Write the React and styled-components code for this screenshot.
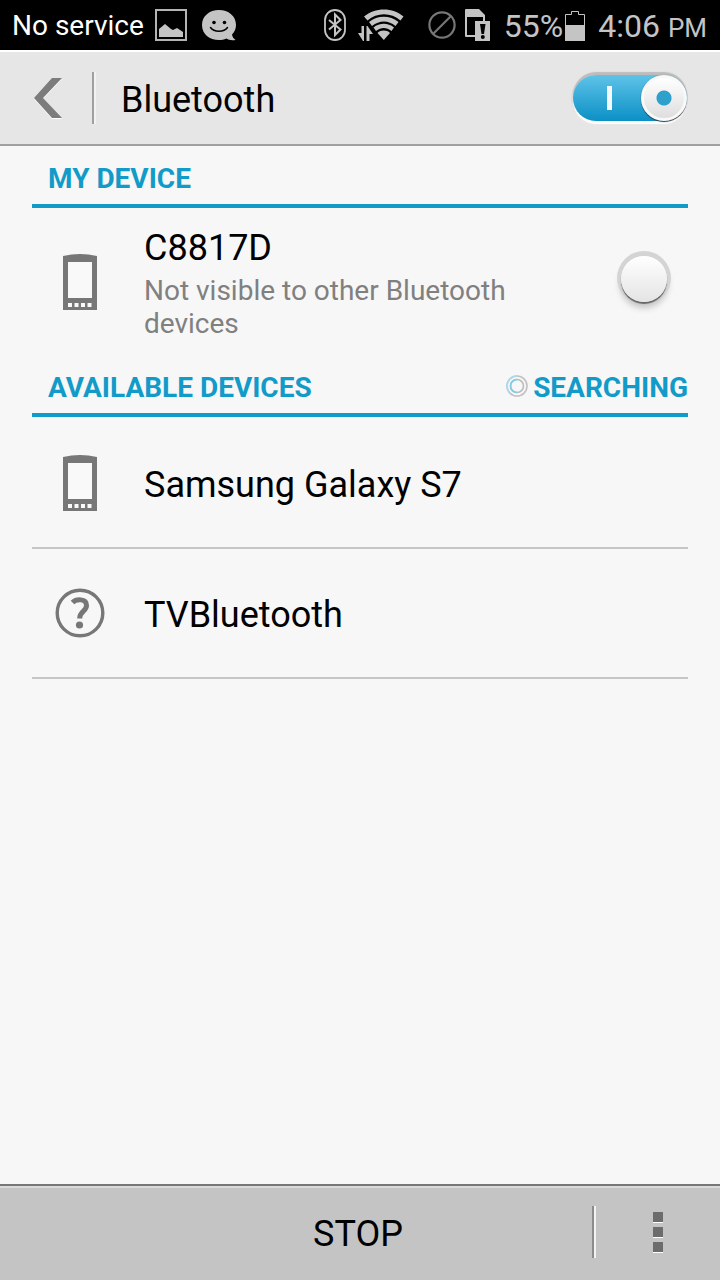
import React, { useState } from 'react';
import styled, { createGlobalStyle } from 'styled-components';

const GlobalStyle = createGlobalStyle`
	*, *::before, *::after {
		box-sizing: border-box;
	}
	body {
		margin: 0;
		background: #f7f7f7;
		color: #000;
		font-family: Roboto, "Liberation Sans", sans-serif;
	}
	button {
		border: 0;
		padding: 0;
		background: none;
		color: inherit;
		font-family: inherit;
		cursor: pointer;
	}
`

const Page = styled.div`
	display: flex;
	flex-direction: column;
	min-height: 100vh;
`

const StatusBar = styled.div`
	display: flex;
	align-items: center;
	justify-content: space-between;
	height: 50px;
	padding: 0 13px 0 12px;
	background: #000;
	color: #c4c4c4;
	font-size: 32px;
	& svg {
		display: block;
		flex: none;
	}
`

const StatusGroup = styled.div`
	display: flex;
	align-items: center;
	gap: ${ ({ $gap }) => $gap };
`

const Carrier = styled.span`
	color: #fff;
	font-size: 28px;
	margin-right: -4px;
`

const Battery = styled.span`
	display: flex;
	align-items: center;
	gap: 2px;
	padding-left: 4px;
	line-height: 48px;
	padding-top: 1px;
`

const Clock = styled.time`
	padding: 1px 0 0 4px;
	& small {
		font-size: 26px;
	}
`

const Header = styled.header`
	display: flex;
	align-items: center;
	height: 96px;
	padding-right: 33px;
	background: #e6e6e6;
	border-top: 2px solid #fff;
	border-bottom: 2px solid #a0a0a0;
`

const BackButton = styled.button`
	display: flex;
	align-items: center;
	justify-content: center;
	width: 92px;
	height: 52px;
	padding-left: 4px;
`

const Divider = styled.span`
	width: 4px;
	height: 52px;
	border-left: 2px solid ${ ({ $dark }) => $dark ? '#8c8c8c' : '#a0a0a0' };
	border-right: 2px solid #f2f2f2;
`

const Title = styled.h1`
	flex-grow: 1;
	margin: 0;
	padding: 4px 0 0 25px;
	font-size: 36px;
	font-weight: 400;
`

const Switch = styled.input`
	appearance: none;
	display: flex;
	align-items: center;
	justify-content: flex-end;
	width: 114px;
	height: 46px;
	margin: 0;
	border-radius: 23px;
	background: ${ ({ checked }) => checked ? 'linear-gradient(#5fc3e8, #0b90c6)' : '#bbb' };
	box-shadow: 0 -3px 1px #bcbcbc, 0 3px 1px #fff, -2px 0 1px #dcdcdc;
	&::before {
		content: '';
		width: 5px;
		height: 24px;
		margin-right: 29px;
		background: #f4fafc;
	}
	&::after {
		content: '';
		width: 46px;
		height: 46px;
		border: 3px solid #f9f9f9;
		border-radius: 50%;
		background: radial-gradient(circle, #2da0cc 7px, transparent 8px), linear-gradient(#fff, #dedede);
		box-shadow: 0 1px 1px #333, 0 0 1px #777;
	}
`

const Main = styled.main`
	flex-grow: 1;
	padding: 0 32px;
`

const SectionTitle = styled.h2`
	display: flex;
	align-items: center;
	justify-content: space-between;
	height: 62px;
	margin: 0;
	padding: 7px 0 0 16px;
	border-bottom: 4px solid #129bc8;
	color: #129bc8;
	font-size: 28px;
	font-weight: 700;
	line-height: 33px;
`

const Searching = styled.span`
	display: flex;
	align-items: center;
	gap: 5px;
	& svg {
		margin-bottom: 4px;
	}
`

const MyDevice = styled.label`
	display: flex;
	align-items: center;
	min-height: 147px;
	padding-right: 21px;
`

const IconCell = styled.span`
	display: flex;
	align-items: center;
	justify-content: center;
	flex: none;
	width: 96px;
	margin-right: 16px;
`

const DeviceText = styled.span`
	flex-grow: 1;
	padding: 0 76px 2px 0;
`

const DeviceName = styled.span`
	display: block;
	padding-top: 4px;
	font-size: 36px;
	line-height: 44px;
`

const DeviceNote = styled.span`
	display: block;
	margin-top: 4px;
	color: #808080;
	font-size: 28px;
	line-height: 33px;
`

const VisibleCheck = styled.input`
	appearance: none;
	flex: none;
	width: 46px;
	height: 46px;
	margin: 0 0 6px;
	border-radius: 50%;
	background: ${ ({ checked }) => checked ? 'radial-gradient(circle, #2da0cc 8px, #f4f4f4 9px)' : 'linear-gradient(#fff, #e4e4e4)' };
	box-shadow: 0 2px 1px #666, 0 -1px 0 4px #d4d4d4, 0 5px 6px 1px #c4c4c4;
`

const DeviceList = styled.ul`
	margin: 0;
	padding: 2px 0 0;
	list-style: none;
`

const DeviceItem = styled.li`
	border-bottom: 2px solid #c6c6c6;
`

const DeviceButton = styled.button`
	display: flex;
	align-items: center;
	width: 100%;
	height: 128px;
	text-align: left;
`

const Footer = styled.footer`
	display: flex;
	align-items: center;
	height: 96px;
	padding-bottom: 2px;
	background: #c4c4c4;
	border-top: 2px solid #777;
	box-shadow: inset 0 2px 0 #dadada;
`

const StopButton = styled.button`
	flex-grow: 1;
	height: 92px;
	padding: 4px 0 0 124px;
	font-size: 36px;
`

const MenuButton = styled.button`
	display: flex;
	flex-direction: column;
	align-items: center;
	justify-content: center;
	gap: 5px;
	width: 124px;
	height: 92px;
	& span {
		width: 10px;
		height: 10px;
		background: #6c6c6c;
		box-shadow: 0 1px 0 #fff;
	}
`

const PictureIcon = () => (
	<svg width="32" height="32" viewBox="0 0 32 32" fill="none">
		<rect x="1" y="1" width="30" height="30" stroke="#b4b4b4" strokeWidth="2" />
		<path d="M4 28V20L10 15L16 20L18 21L22 19L28 23V28Z" fill="#c4c4c4" />
	</svg>
)

const SmileyIcon = () => (
	<svg width="35" height="31" viewBox="0 0 35 31">
		<path d="M17 0C26.500 0 34 6 34 15C34 19 32.500 22 30 24.500C30.500 27 31.500 28.500 33.500 30C29.500 30.500 26.500 30 24.500 28.500C22 29.600 19.500 30 17 30C7.500 30 0 24 0 15S7.500 0 17 0Z" fill="#c4c4c4" />
		<circle cx="12" cy="12.500" r="1.800" />
		<circle cx="22.500" cy="12.500" r="1.800" />
		<path d="M8.500 17.500C12 22.500 22 22.500 25.500 17.500" fill="none" stroke="#000" strokeWidth="1.500" strokeLinecap="round" />
	</svg>
)

const BluetoothIcon = () => (
	<svg width="22" height="32" viewBox="0 0 22 32" fill="none" stroke="#c4c4c4">
		<rect x="1" y="1" width="20" height="30" rx="10" strokeWidth="1.800" />
		<path d="M5 11L16.500 20.500L11 26V5.500L16.500 11L5 20.500" strokeWidth="2" />
	</svg>
)

const WifiIcon = () => (
	<svg width="46" height="32" viewBox="0 0 46 32" fill="none">
		<path d="M6 7.500C17 -2 35 -2 45.500 7.500L42.500 11.500C33 3 19 3 9.500 11.500Z" fill="#c4c4c4" />
		<path d="M11 13C19.500 6 32 6 40.500 13L37.500 17C30.500 11 21.500 11 14 17Z" fill="#c4c4c4" />
		<path d="M15.500 18.500C21.500 13.500 30 13.500 36 18.500L33.500 22C28.500 18 23 18 18 22Z" fill="#c4c4c4" />
		<path d="M25.800 31L19.500 24C23 20.800 28.500 20.800 32 24Z" fill="#c4c4c4" />
		<path d="M3.500 17H6V32H5L0 24H3.500ZM8.500 32V17H9.500L15 25H11.500V32Z" fill="#c4c4c4" />
	</svg>
)

const BlockedIcon = () => (
	<svg width="28" height="28" viewBox="0 0 28 28" fill="none" stroke="#777" strokeWidth="2.200">
		<circle cx="14" cy="14" r="12.600" />
		<path d="M5 23L23 5" />
	</svg>
)

const SimIcon = () => (
	<svg width="26" height="32" viewBox="0 0 26 32">
		<path d="M1 0H14L20 6V12H18V8H2V26H10V28H1Q0 28 0 27V1Q0 0 1 0Z" fill="#c4c4c4" />
		<path d="M10 12H25V32H10Z" fill="#c4c4c4" />
		<path d="M15 15H20.500L19 25H16.500Z" />
		<circle cx="17.800" cy="28" r="2" />
	</svg>
)

const BatteryIcon = () => (
	<svg width="20" height="30" viewBox="0 0 20 30">
		<path d="M.5 29.500V3.500H6.500V.5H13.500V3.500H19.500V29.500Z" fill="none" stroke="#c4c4c4" />
		<path d="M0 14H20V30H0Z" fill="#c4c4c4" />
	</svg>
)

const BackIcon = () => (
	<svg width="28" height="41" viewBox="0 0 28 41">
		<path d="M18 1H28L9 21L28 41H18L0 21Z" fill="#fff" />
		<path d="M18 0H28L9 20L28 40H18L0 20Z" fill="#7c7c7c" />
	</svg>
)

const PhoneIcon = () => (
	<svg width="34" height="56" viewBox="0 0 34 56">
		<path d="M0 2Q17 -2 34 2V56H0Z" fill="#777" />
		<path d="M5 8H29V44H5ZM5 49H9V53H5ZM11.500 49H15.500V53H11.500ZM18 49H22V53H18ZM24.500 49H28.500V53H24.500Z" fill="#f9f9f9" />
	</svg>
)

const UnknownIcon = () => (
	<svg width="50" height="50" viewBox="0 0 50 50" fill="none" stroke="#777">
		<circle cx="25" cy="25" r="22.800" strokeWidth="3.400" />
		<path d="M17.500 14.500C21 11 31.500 10 31.500 17.500C31.500 23.500 24.700 23 24.700 30.500" strokeWidth="5" />
		<circle cx="24.500" cy="37" r="3.600" fill="#777" stroke="none" />
	</svg>
)

const SpinnerIcon = () => (
	<svg width="22" height="22" viewBox="0 0 22 22" fill="none" strokeWidth="1.600">
		<circle cx="11" cy="11" r="10" stroke="#c2c2c2" />
		<circle cx="11" cy="11" r="6.500" stroke="#bcbcbc" />
		<path d="M11 1A10 10 0 0 0 3.500 17.500" stroke="#a8dcf0" />
		<path d="M11 4.500A6.500 6.500 0 0 0 11 17.500" stroke="#7ccdea" />
	</svg>
)

const devices = [
	{ name: 'Samsung Galaxy S7', Icon: PhoneIcon },
	{ name: 'TVBluetooth', Icon: UnknownIcon },
];

const App = () => {
	const [enabled, setEnabled] = useState(true);
	const [visible, setVisible] = useState(false);

	return (
		<Page>
			<GlobalStyle />
			<StatusBar>
				<StatusGroup $gap="15px">
					<Carrier>No service</Carrier>
					<PictureIcon />
					<SmileyIcon />
				</StatusGroup>
				<StatusGroup $gap="24px">
					<StatusGroup $gap="12px">
						<BluetoothIcon />
						<WifiIcon />
					</StatusGroup>
					<StatusGroup $gap="9px">
						<BlockedIcon />
						<SimIcon />
						<Battery>
							55%
							<BatteryIcon />
						</Battery>
						<Clock>4:06 <small>PM</small></Clock>
					</StatusGroup>
				</StatusGroup>
			</StatusBar>
			<Header>
				<BackButton aria-label="Back"><BackIcon /></BackButton>
				<Divider />
				<Title>Bluetooth</Title>
				<Switch
					type="checkbox"
					role="switch"
					aria-label="Bluetooth"
					checked={enabled}
					onChange={() => setEnabled(!enabled)}
				/>
			</Header>
			<Main>
				<SectionTitle>MY DEVICE</SectionTitle>
				<MyDevice>
					<IconCell><PhoneIcon /></IconCell>
					<DeviceText>
						<DeviceName>C8817D</DeviceName>
						<DeviceNote>Not visible to other Bluetooth devices</DeviceNote>
					</DeviceText>
					<VisibleCheck
						type="checkbox"
						checked={visible}
						onChange={() => setVisible(!visible)}
					/>
				</MyDevice>
				<SectionTitle>
					AVAILABLE DEVICES
					<Searching><SpinnerIcon />SEARCHING</Searching>
				</SectionTitle>
				<DeviceList>
					{ devices.map(({ name, Icon }) => (
						<DeviceItem key={name}>
							<DeviceButton>
								<IconCell><Icon /></IconCell>
								<DeviceName>{name}</DeviceName>
							</DeviceButton>
						</DeviceItem>
					)) }
				</DeviceList>
			</Main>
			<Footer>
				<StopButton>STOP</StopButton>
				<Divider $dark />
				<MenuButton aria-label="More options">
					<span />
					<span />
					<span />
				</MenuButton>
			</Footer>
		</Page>
	);
}

export default App;
